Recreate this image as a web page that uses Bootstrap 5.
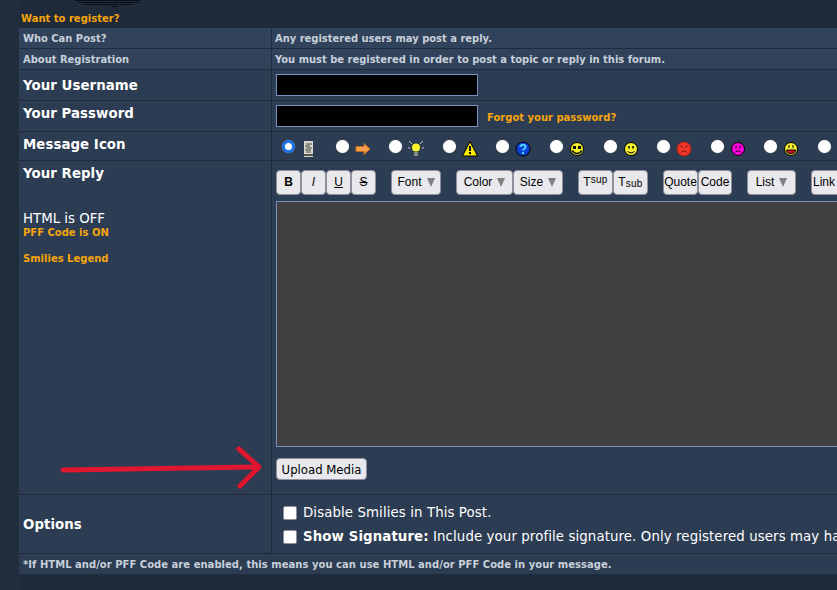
<!DOCTYPE html>
<html lang="en">
<head>
<meta charset="utf-8">
<title>Reply</title>
<link rel="stylesheet" href="https://cdn.jsdelivr.net/npm/bootstrap@5.3.0/dist/css/bootstrap.min.css">
<style>
html,body{height:100%;overflow:hidden}
body{background:#1f2a3a;font-family:"DejaVu Sans",sans-serif;color:#fff}
.pg-gutter{width:19px;background:#212d3c;flex:none}
.pg-main{width:1100px;flex:none}
.pg-head{height:28px;position:relative}
.pg-logo{position:absolute;left:56px;top:0}
.reg-title{position:absolute;left:2px;top:12px;font-size:10px;font-weight:700;color:#f6a50c;line-height:13px}
.frow{display:flex;background:#2c3c52;margin-bottom:1px}
.frow.light{background:#30435a}
.lcell{width:253px;flex:none;padding-left:4px;border-right:1px solid #1f2a3a;font-weight:700}
.rcell{flex:1;padding-left:3px;min-width:0}
.lab{font-size:13.33px;line-height:16px;letter-spacing:.06px}
.sm{font-size:9.95px;font-weight:700;color:#c8d0da;line-height:13px}
.h20{height:20px;align-items:center}
.h20 .lcell,.h20 .rcell{height:20px;display:flex;align-items:center}
.h30{height:30px}
.pwbox{display:block;width:202px;height:22px;background:#000;border:1px solid #7b8fc0;margin:4px 0 0 1px}
.pw-wrap{gap:9px}
.forgot{font-size:10px;font-weight:700;color:#f6a50c;margin-top:9px}
.h28{height:28px}
.icons{display:flex;align-items:center;height:28px;padding-left:10px}
.rad{width:13px;height:13px;border-radius:50%;background:#fff;flex:none;box-shadow:0 0 1px #999}
.rad.on{background:#fff;border:3px solid #1a73e8}
.icon{width:16px;height:16px;flex:none;margin:6px 0 0 6px}
.optslot{display:flex;align-items:center;width:53.6px;flex:none}
.tbar{display:flex;align-items:center;height:25px;margin:9px 0 0 1px}
.tb{height:25px;padding:0;background:#e9e9ed;color:#000;border:1px solid #8f8f9d;border-radius:4px;font:12px/23px "Liberation Sans",sans-serif;text-align:center;flex:none}
.tb sup{font-size:10px;top:-.3em;letter-spacing:.3px}
.tb sub{font-size:10px;position:relative;bottom:-.1em;vertical-align:baseline;letter-spacing:.3px}
.caret-g{display:inline-block;width:0;height:0;border-left:4px solid transparent;border-right:4px solid transparent;border-top:9px solid #808080;margin-left:5px;vertical-align:-1px}
.tsq{width:25px}
.tb-link{text-align:left;padding-left:1px}
.editor{width:800px;height:246px;background:#404040;border:1px solid #7b8fc0;margin:6px 0 0 1px;display:block;padding:0}
.up{display:inline-block;height:22px;width:91px;padding:0;margin:11px 0 0 1px;background:#e9e9ed;color:#000;border:1px solid #8f8f9d;border-radius:4px;font:11.7px/22px "DejaVu Sans",sans-serif}
.rep-l{position:relative;height:333px}
.html-off{position:absolute;left:4px;top:50px;font-size:13.33px;font-weight:400;line-height:16px}
.orange{position:absolute;left:4px;font-size:10px;font-weight:700;color:#f6a50c;line-height:13px}
.arrow{position:absolute;left:0;top:0}
.opt-l{display:flex;align-items:center;padding-top:2px}
.opt-row{display:flex;align-items:center;gap:6px;font-size:13.33px;line-height:16px;letter-spacing:.1px;white-space:nowrap;height:24px}
.chk{width:14px;height:14px;background:#fff;border:1px solid #8f8f9d;border-radius:2px;flex:none;appearance:none;margin:0}
.opt-wrap{padding:6px 0 0 11px}
.foot{height:20px;background:#2c3c52;font-size:10px;letter-spacing:.03px;font-weight:700;color:#c8d0da;line-height:21px;padding-left:4px}
</style>
</head>
<body class="d-flex m-0">
<div class="pg-gutter"></div>
<div class="pg-main">
  <div class="pg-head">
    <svg class="pg-logo" width="90" height="8" viewBox="0 0 90 8"><g stroke="#0b1018" stroke-width="1"><path d="M0 .5H66M3 2.500H64M8 4.500H58"/><path d="M36 6.500H43"/></g></svg>
    <div class="reg-title">Want to register?</div>
  </div>
  <div class="frow light h20"><div class="lcell sm">Who Can Post?</div><div class="rcell sm">Any registered users may post a reply.</div></div>
  <div class="frow light h20"><div class="lcell sm">About Registration</div><div class="rcell sm">You must be registered in order to post a topic or reply in this forum.</div></div>
  <div class="frow h30"><div class="lcell lab pt-2">Your Username</div><div class="rcell"><span class="pwbox"></span></div></div>
  <div class="frow h30"><div class="lcell lab" style="padding-top:5px">Your Password</div><div class="rcell d-flex pw-wrap"><span class="pwbox"></span><span class="forgot">Forgot your password?</span></div></div>
  <div class="frow h28"><div class="lcell lab" style="padding-top:5px">Message Icon</div><div class="rcell p-0"><div class="icons">
    <div class="optslot"><span class="rad on"></span><svg class="icon" viewBox="0 0 16 16"><path d="M3 0h9v16H3z" fill="#d8d8cc"/><path d="M5 3h6M4 5h5M5 7h6M4 9h6M5 11h5" stroke="#444"/><path d="M3 13h9v2H3z" fill="#555"/></svg></div>
    <div class="optslot"><span class="rad"></span><svg class="icon" viewBox="0 0 16 16"><path d="M1 5.500h8V2.500L15 8l-6 5.500v-3H1z" fill="#f5a04a" stroke="#c06a20"/></svg></div>
    <div class="optslot"><span class="rad"></span><svg class="icon" viewBox="0 0 16 16"><circle cx="8" cy="6.500" r="4" fill="#f8f52a"/><path d="M6 11h4v4H6z" fill="#888"/><path d="M1 0l3 3M15 0l-3 3M0 7h2M14 7h2" stroke="#c8c8c8"/></svg></div>
    <div class="optslot"><span class="rad"></span><svg class="icon" viewBox="0 0 16 16"><path d="M8 .5l7.500 14.500H.5z" fill="#ffec00" stroke="#000"/><path d="M8 5v5M8 11v2" stroke="#000" stroke-width="2"/></svg></div>
    <div class="optslot"><span class="rad"></span><svg class="icon" viewBox="0 0 16 16"><circle cx="8" cy="8" r="7" fill="#0a3fd8" stroke="#000"/><path d="M5.500 6c0-3 5-3 5 0 0 2-2.500 2-2.500 3.500M8 11v2" stroke="#48d0ff" stroke-width="2" fill="none"/></svg></div>
    <div class="optslot"><span class="rad"></span><svg class="icon" viewBox="0 0 16 16"><circle cx="8" cy="8" r="6.500" fill="#f6f02a" stroke="#000"/><path d="M4 5h3v3H4zM9 5h3v3H9z" fill="#000"/><path d="M3.500 9.500c2 4 7 4 9 0" stroke="#000" stroke-width="1.500" fill="none"/></svg></div>
    <div class="optslot"><span class="rad"></span><svg class="icon" viewBox="0 0 16 16"><circle cx="8" cy="8" r="6.500" fill="#f6f02a" stroke="#000"/><path d="M6 5v2.500M10 5v2.500" stroke="#000" stroke-width="1.500"/><path d="M4.500 10c1.500 2.500 5.500 2.500 7 0" stroke="#000" fill="none"/></svg></div>
    <div class="optslot"><span class="rad"></span><svg class="icon" viewBox="0 0 16 16"><circle cx="8" cy="8" r="7" fill="#f0382a" stroke="#b02015"/><path d="M4.500 5l2.500 1.500M11.500 5L9 6.500M5 11.500c1.500-2 4.500-2 6 0" stroke="#7a120a" fill="none"/></svg></div>
    <div class="optslot"><span class="rad"></span><svg class="icon" viewBox="0 0 16 16"><circle cx="8" cy="8" r="6.500" fill="#ff00e0" stroke="#000"/><path d="M6 5v2.500M10 5v2.500M5 11.500c1.500-2 4.500-2 6 0" stroke="#000" fill="none"/></svg></div>
    <div class="optslot"><span class="rad"></span><svg class="icon" viewBox="0 0 16 16"><circle cx="8" cy="8" r="6.500" fill="#f6f02a" stroke="#000"/><path d="M6 4v3M10 4v3" stroke="#000"/><path d="M3.500 9h9c0 5-9 5-9 0z" fill="#d0102a" stroke="#000"/></svg></div>
    <div class="optslot"><span class="rad"></span></div>
  </div></div></div>
  <div class="frow" style="height:333px">
    <div class="lcell rep-l">
      <div class="lab" style="padding-top:5px">Your Reply</div>
      <div class="html-off">HTML is OFF</div>
      <div class="orange" style="top:65px">PFF Code is ON</div>
      <div class="orange" style="top:91px">Smilies Legend</div>
      <svg class="arrow" width="253" height="333" viewBox="0 0 253 333"><g fill="none" stroke="#e0162f" stroke-width="5" stroke-linecap="round" stroke-linejoin="round"><path d="M44 309L238 306"/><path d="M220 288L240 306L221 325"/></g></svg>
    </div>
    <div class="rcell">
      <div class="tbar">
        <span class="tb tsq"><b>B</b></span><span class="tb tsq"><i>I</i></span><span class="tb tsq"><u>U</u></span><span class="tb tsq"><s>S</s></span>
        <span class="tb" style="width:50px;margin-left:15px">Font<span class="caret-g"></span></span>
        <span class="tb" style="width:57px;margin-left:15px">Color<span class="caret-g"></span></span><span class="tb" style="width:50px">Size<span class="caret-g"></span></span>
        <span class="tb" style="width:35px;margin-left:15px">T<sup>sup</sup></span><span class="tb" style="width:35px">T<sub>sub</sub></span>
        <span class="tb" style="width:35px;margin-left:15px">Quote</span><span class="tb" style="width:34px">Code</span>
        <span class="tb" style="width:49px;margin-left:15px">List<span class="caret-g"></span></span>
        <span class="tb tb-link" style="width:40px;margin-left:15px">Link</span>
      </div>
      <div class="editor"></div>
      <button type="button" class="up">Upload Media</button>
    </div>
  </div>
  <div class="frow" style="height:58px">
    <div class="lcell lab opt-l">Options</div>
    <div class="rcell opt-wrap">
      <div class="opt-row"><input class="chk" type="checkbox"><span>Disable Smilies in This Post.</span></div>
      <div class="opt-row"><input class="chk" type="checkbox"><span><b>Show Signature:</b> Include your profile signature. Only registered users may have signatures.</span></div>
    </div>
  </div>
  <div class="foot">*If HTML and/or PFF Code are enabled, this means you can use HTML and/or PFF Code in your message.</div>
</div>
</body>
</html>
